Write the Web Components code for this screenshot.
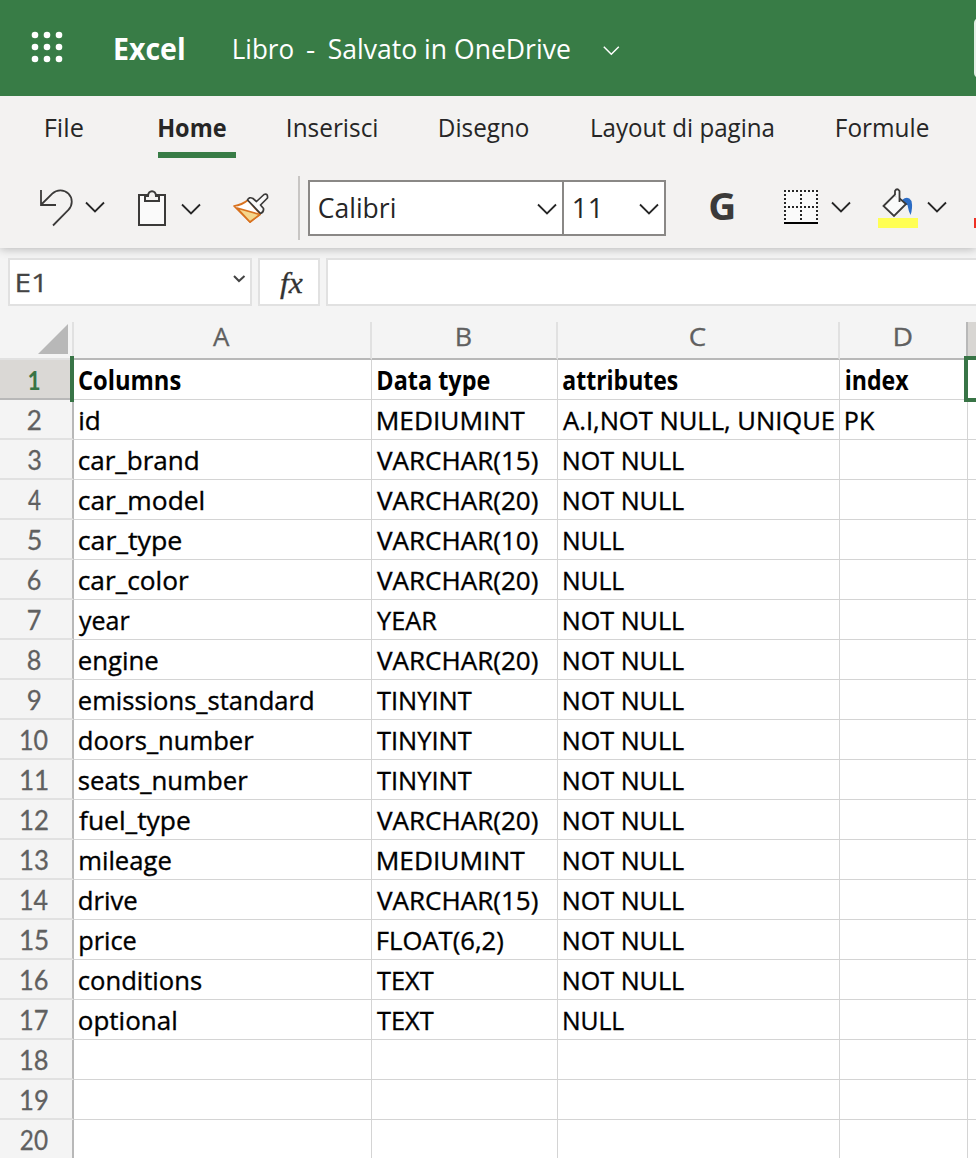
<!DOCTYPE html>
<html lang="it">
<head>
<meta charset="utf-8">
<title>Excel</title>
<style>
html,body{margin:0;height:1158px;overflow:hidden;background:#f4f4f4}
body{font-family:"Open Sans","Noto Sans",sans-serif;color:#262626}
</style>
</head>
<body>
<excel-app></excel-app>
<script>
const pen = document.createElement('canvas').getContext('2d');
function define(name, html, after) {
  const t = document.createElement('template');
  t.innerHTML = html;
  customElements.define(name, class extends HTMLElement {
    constructor() {
      super();
      this.attachShadow({mode: 'open'}).append(t.content.cloneNode(true));
    }
    connectedCallback() { if (after) after.call(this, this.shadowRoot); }
  });
}

/* A line of text whose ink is condensed to an exact width (w). Lines that
   open with a straight stem get a one-pixel side bearing. */
define('fit-text', `<style>
:host{display:block;flex:none;white-space:pre;height:var(--lh,40px);line-height:var(--lh,40px)}
span{display:inline-block;transform-origin:0 50%}
</style><span></span>`, function (root) {
  const s = root.querySelector('span'), w = +this.getAttribute('w');
  s.textContent = this.getAttribute('text');
  const c = getComputedStyle(this);
  pen.font = `${c.fontStyle} ${c.fontWeight} ${parseFloat(c.fontSize) * 10}px ${c.fontFamily}`;
  const m = pen.measureText(s.textContent);
  const left = m.actualBoundingBoxLeft / 10, right = m.actualBoundingBoxRight / 10;
  const bearing = /^[BDEFHILMNPimp]/.test(s.textContent) ? 1.2 : 0;
  const k = (w - bearing - .4) / (left + right);
  this.style.width = w + 'px';
  s.style.transform = `translateX(${left * k + bearing}px) scaleX(${k})`;
});

define('chevron-down', `<style>:host{display:block;flex:none;width:20px;height:12px}svg{display:block}</style>
<svg width="20" height="12" fill="none" stroke="currentColor" stroke-width="1.8"><path d="M1 1.5L10 10.5L19 1.5"/></svg>`);

define('title-bar', `<style>
:host{display:flex;height:96px;background:#387c46;color:#fff;--lh:96px;overflow:hidden;position:relative;z-index:1}
svg{display:block;margin-left:31px;flex:none}
.app{font-size:31px;font-weight:700;margin-left:50px}
.doc{font-size:27.5px;--lh:97px}
.search{width:40px;height:60px;flex:none;margin:18px 0 0 354px;background:#e4ede6;border-radius:5px}
</style>
<svg width="33" height="96" fill="#fff"><circle cx="4" cy="35" r="3.3"/><circle cx="16" cy="35" r="3.3"/><circle cx="28" cy="35" r="3.3"/><circle cx="4" cy="47" r="3.3"/><circle cx="16" cy="47" r="3.3"/><circle cx="28" cy="47" r="3.3"/><circle cx="4" cy="59" r="3.3"/><circle cx="16" cy="59" r="3.3"/><circle cx="28" cy="59" r="3.3"/></svg>
<fit-text class="app" text="Excel" w="70"></fit-text>
<fit-text class="doc" style="margin-left:49px" text="Libro" w="60"></fit-text>
<fit-text class="doc" style="margin-left:14px" text="-" w="8"></fit-text>
<fit-text class="doc" style="margin-left:14px" text="Salvato in OneDrive" w="241"></fit-text>
<svg style="margin-left:33px" width="17" height="96" fill="none" stroke="#fff" stroke-width="1.5"><path d="M.8 46.8L8.3 54.3L15.8 46.8"/></svg>
<div class="search"></div>`);

define('ribbon-tabs', `<style>
:host{display:flex;height:62px;font-size:25px;--lh:62px;overflow:hidden}
.on{font-weight:700;width:78px;border-bottom:6px solid #387c46;height:56px;box-sizing:content-box}
</style>
<fit-text style="margin-left:44.500px" text="File" w="38"></fit-text>
<div class="on" style="margin-left:75.500px"><fit-text text="Home" w="68"></fit-text></div>
<fit-text style="margin-left:51px" text="Inserisci" w="90"></fit-text>
<fit-text style="margin-left:62px" text="Disegno" w="89.500"></fit-text>
<fit-text style="margin-left:62px" text="Layout di pagina" w="182.500"></fit-text>
<fit-text style="margin-left:63px" text="Formule" w="92.500"></fit-text>`);

define('ribbon-tools', `<style>
:host{display:flex;height:90px;overflow:hidden;color:#262626}
svg{display:block;flex:none;margin-top:18px}
chevron-down{margin-top:43px}
.sep{width:2px;height:64px;background:#c8c6c4;margin:18px 8px 0 25px;flex:none}
.box{display:flex;flex:none;box-sizing:border-box;height:56px;border:2px solid #8a8886;background:#fff;margin-top:22px;font-size:26.5px;--lh:53px}
.box chevron-down{margin-top:21px}
.bold{font-size:37px;font-weight:700;color:#3b3a39;--lh:96px;margin-left:44px}
</style>
<svg style="margin-left:36px" width="40" height="56" viewBox="36 176 40 56" fill="none" stroke="#3b3a39" stroke-width="1.8"><path d="M41 190V205H56M41.3 204.5L52.3 193.6A11.4 11.4 0 0 1 68.4 209.8L53 225.5"/></svg>
<chevron-down style="margin-left:9px"></chevron-down>
<svg style="margin-left:31px" width="32" height="56" viewBox="136 176 32 56" stroke="#3b3a39" stroke-width="2"><path fill="#fafafa" d="M139 195H165V225H139Z"/><path fill="#f3f2f1" d="M145 201V196H148C148 189.500 156 189.500 156 196H159V201Z"/></svg>
<chevron-down style="margin:45px 0 0 13px"></chevron-down>
<svg style="margin-left:30px" width="42" height="56" viewBox="231 176 42 56" stroke-linejoin="round" stroke-width="1.700"><path d="M234 206Q242 205 248 200L260 214L250 222Z" fill="#fff" stroke="#d8721f"/><path d="M237 208L260 214.500L250 222Z" fill="#f5d78c" stroke="#d8721f"/><path d="M247.500 200Q249 196.500 253 198.500L256.500 201.500L264 194.500Q268 193 267.500 198L260.500 205L263.500 208.500Q264 212 260.500 213.500Z" fill="#fafafa" stroke="#3b3a39"/></svg>
<div class="sep"></div>
<div class="box" style="width:256px"><fit-text style="margin-left:9px" text="Calibri" w="76"></fit-text><chevron-down style="margin-left:142px"></chevron-down></div>
<div class="box" style="width:102px;border-left:0"><fit-text style="margin-left:10px" text="11" w="24"></fit-text><chevron-down style="margin-left:41px"></chevron-down></div>
<fit-text class="bold" text="G" w="24"></fit-text>
<svg style="margin-left:48px" width="38" height="56" viewBox="782 176 38 56"><path d="M784 190H818V224H784Z" fill="#fafafa"/><g stroke="#262626" stroke-width="2" stroke-dasharray="2 2" fill="none"><path d="M784 191H818M784 207H818M785 190V220M801 190V220M817 190V220"/></g><path d="M784 222H818V224H784Z" fill="#000"/></svg>
<chevron-down style="margin-left:11px"></chevron-down>
<svg style="margin-left:25px" width="44" height="56" viewBox="876 176 44 56" stroke-width="1.800"><path d="M878 218H918V228H878Z" fill="#ffff54"/><path d="M902 200Q908 195 911.500 201Q913 208 910.500 215Q908.500 211 907.500 205L905 205Z" fill="#2b6cc4"/><path d="M883.500 206L895 194.500L906 204L894 216Z" fill="#fafafa" stroke="#3b3a39"/><path d="M895 195V191Q897 187.500 899.500 191V202" fill="#fafafa" stroke="#3b3a39"/></svg>
<chevron-down style="margin-left:7px"></chevron-down>
<svg style="margin-left:27px" width="20" height="56"><path d="M0 42H20V52H0Z" fill="#ee3124"/></svg>`);

define('office-ribbon', `<style>
:host{display:block;height:152px;background:#f3f2f1;box-shadow:0 1px 9px rgba(0,0,0,.26);position:relative}
</style><ribbon-tabs></ribbon-tabs><ribbon-tools></ribbon-tools>`);

define('formula-bar', `<style>
:host{display:flex;height:66px;padding:10px 0 0 8px;gap:6px;box-sizing:border-box;position:relative}
.b{height:48px;box-sizing:border-box;border:2px solid #e1e1e1;background:#fff;display:flex;--lh:45px;flex:none}
.n{width:244px;font-size:26px;color:#444;-webkit-text-stroke:.3px}
.f{width:62px;font:italic 29px "Liberation Serif",serif;color:#333;--lh:47px;-webkit-text-stroke:.3px}
.i{width:660px}
svg{margin:13px 0 0 191px}
</style>
<div class="b n"><fit-text style="margin-left:6px" text="E1" w="26"></fit-text><svg width="13" height="12" fill="none" stroke="#444" stroke-width="2"><path d="M1 3L6 8L11.500 3"/></svg></div>
<div class="b f"><fit-text style="margin-left:20px" text="fx" w="23"></fit-text></div>
<div class="b i"></div>`);

define('sheet-cell', `<style>
:host{display:block;box-sizing:border-box;height:40px;border-right:1px solid #d4d4d4;border-bottom:1px solid #d4d4d4;background:#fff;color:#000;font-size:26px;padding-left:5px;overflow:hidden;-webkit-text-stroke:.35px}
:host([strong]){font-weight:700;--lh:41px;-webkit-text-stroke:0}
:host([wide]){padding-left:4.500px}
</style><slot></slot>`);

define('row-head', `<style>
:host{display:flex;justify-content:center;box-sizing:border-box;height:40px;padding-right:3px;border-right:2px solid #b8b8b8;border-bottom:2px solid #e1e1e1;background:#f4f4f4;color:#606060;font:27px Lato,sans-serif;-webkit-text-stroke:.3px}
:host([on]){background:#dad8d5;color:#387446;border-bottom-color:#b8b8b8;font-weight:700;-webkit-text-stroke:0}
</style><slot></slot>`);

define('col-head', `<style>
:host{display:flex;justify-content:center;box-sizing:border-box;height:38px;--lh:28px;border-right:2px solid #e1e1e1;border-bottom:2px solid #b8b8b8;background:#f4f4f4;color:#606060;font-size:26px;-webkit-text-stroke:.3px;padding-right:1px}
:host(.corner){border-bottom-color:#e1e1e1;justify-content:flex-end;padding-right:0}
:host(.last){border-right-color:#b8b8b8}
:host(.on){background:#d8d6d3;border-right:0}
</style><slot></slot>`);

const NN = ['NOT NULL', 121], NU = ['NULL', 61], TI = ['TINYINT', 95], V = n => [`VARCHAR(${n})`, 161], M = ['MEDIUMINT', 148], TX = ['TEXT', 57];
const DATA = [
  [['Columns', 102], ['Data type', 113], ['attributes', 115], ['index', 64]],
  [['id', 20], M, ['A.I,NOT NULL, UNIQUE', 271], ['PK', 30]],
  [['car_brand', 119], V(15), NN], [['car_model', 124.5], V(20), NN],
  [['car_type', 102.5], V(10), NU], [['car_color', 110], V(20), NU],
  [['year', 51], ['YEAR', 60], NN], [['engine', 79], V(20), NN],
  [['emissions_standard', 234], TI, NN], [['doors_number', 175], TI, NN],
  [['seats_number', 169], TI, NN], [['fuel_type', 111], V(20), NN],
  [['mileage', 92], M, NN], [['drive', 58], V(15), NN],
  [['price', 57], ['FLOAT(6,2)', 126.5], NN], [['conditions', 122.5], TX, NN],
  [['optional', 97], TX, NU], [], [], []
];
define('sheet-grid', `<style>
:host{display:block;position:relative;padding-top:8px}
.g{display:grid;grid-template-columns:74px 298px 186px 282px 128px 60px}
.sel{position:absolute;box-sizing:border-box;top:42px;height:46px}
.row{left:70px;width:4px;background:#387446}
.cell{left:964px;width:80px;border:4px solid #387446}
</style><div class="g"></div>
<div class="sel row"></div>
<div class="sel cell"></div>`, function (root) {
  let h = '<col-head class="corner"><svg width="34" height="36"><path d="M30 2V32H0Z" fill="#b8b8b8"/></svg></col-head>';
  [['A', 17], ['B', 15], ['C', 16], ['D', 18]].forEach(([c, w]) => h += `<col-head class="${c === 'D' ? 'last' : ''}"><fit-text text="${c}" w="${w}"></fit-text></col-head>`);
  h += '<col-head class="on"></col-head>';
  DATA.forEach((r, i) => {
    const n = i + 1;
    h += `<row-head ${i ? '' : 'on'}><fit-text text="${n}" w="${n === 1 ? 11 : n < 10 ? 13 : 27}"></fit-text></row-head>`;
    for (let c = 0; c < 5; c++) {
      const d = r[c];
      h += `<sheet-cell ${i ? '' : 'strong'} ${d && /^[AVTYy]/.test(d[0]) ? 'wide' : ''}>${d ? `<fit-text text="${d[0]}" w="${d[1]}"></fit-text>` : ''}</sheet-cell>`;
    }
  });
  root.querySelector('.g').innerHTML = h;
});

define('excel-app', `<style>:host{display:block;width:976px;height:1158px;overflow:hidden;background:#f4f4f4}</style>
<title-bar></title-bar><office-ribbon></office-ribbon><formula-bar></formula-bar><sheet-grid></sheet-grid>`);
</script>
</body>
</html>
